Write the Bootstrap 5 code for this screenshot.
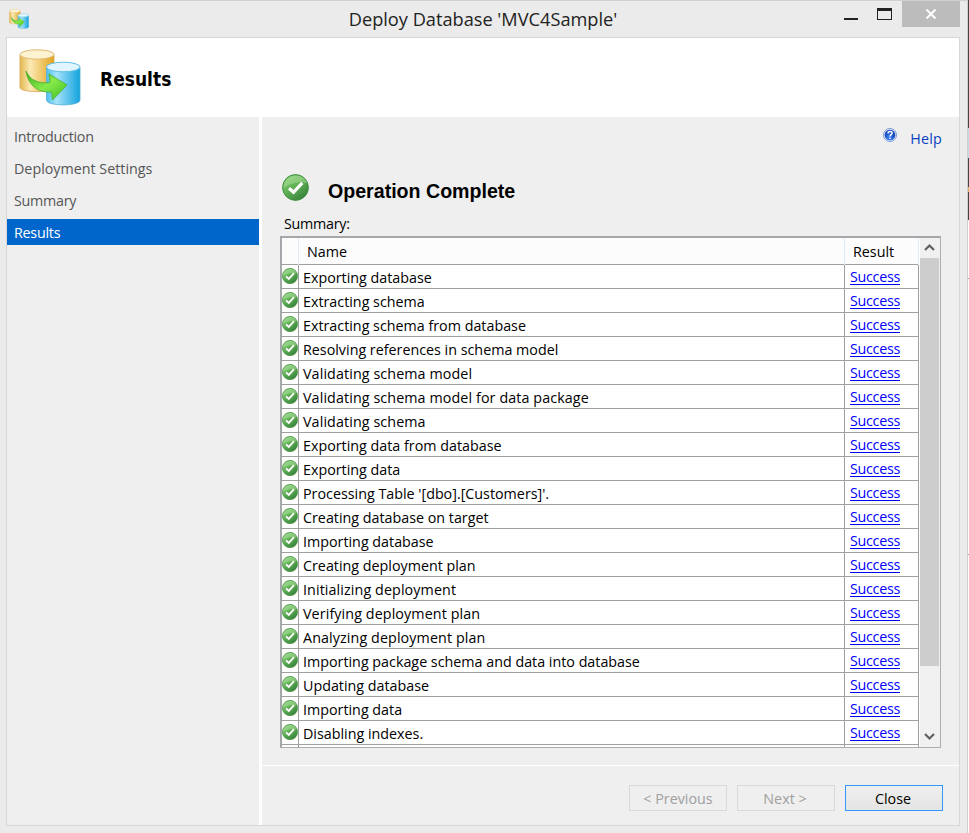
<!DOCTYPE html>
<html lang="en">
<head>
<meta charset="utf-8">
<title>Deploy Database 'MVC4Sample'</title>
<link href="https://cdn.jsdelivr.net/npm/bootstrap@5.3.0/dist/css/bootstrap.min.css" rel="stylesheet">
<style>
body{width:969px;height:833px;overflow:hidden;background:#fff;font:14.3px/20px "Open Sans","Noto Sans",sans-serif;color:#000}
.win{width:968px;height:833px;background:#ebebeb;border-top:1px solid #d0d0d0;border-right:1px solid #cfcfcf}
.edge{width:1px;background:linear-gradient(#444 128px,#c4dce6 128px 158px,#444 158px 187px,#e0b060 187px 192px,#444 192px 220px,#fff 220px 278px,#999 278px 279px,#fff 279px 554px,#999 554px 555px,#fff 555px)}
.titlebar{height:36px;padding-left:9px}
.titlebar .app{margin-top:8px}
.caption{font-size:18.2px;line-height:24px;padding-top:6px;color:#222;padding-left:93px}
.minb{width:14px;height:2px;margin-top:17px;background:#222}
.maxb{width:15px;height:12px;margin:7px 10px 0 19px;border:1px solid #222;border-top-width:3px}
.closeb{width:58px;height:26px;background:#bcbcbc;margin-right:7px}
.client{width:954px;height:789px;margin-left:6px;border:1px solid #d7d7d7;background:#efefef}
.banner{height:79px;padding-left:12px}
.banner h1{font:bold 19px/24px "DejaVu Sans Condensed","DejaVu Sans",sans-serif;font-stretch:condensed;margin:2px 0 0 19px}
.steps{width:255px;border-right:3px solid #fff;padding-top:6px;gap:6px}
.steps a{height:26px;width:252px;padding-left:7px;line-height:27px;color:#555;text-decoration:none}
.steps a.active{background:#06c;color:#fff}
.steps .tight{letter-spacing:-.25px}
.helpline{height:40px;padding:11px 17px 0 0;gap:13px;color:#0b3fbf}
.helpline span{line-height:22px;letter-spacing:.2px}
.done{height:27px;margin:17px 0 0 20px;gap:19px}
.done h2{font:bold 19.6px/24px "Liberation Sans",Arial,sans-serif;margin:5px 0 0}
.sumlabel{margin:12px 0 0 22px;height:23px;line-height:21px;letter-spacing:-.25px}
.gridbox{width:661px;height:512px;margin-left:18px;border:1px solid #abadb3;border-top:2px solid #a5a7ab;border-left:2px solid #a5a7ab;background:#fff}
.rowsarea{width:637px;height:509px;overflow:hidden}
.hd,.rw{display:grid;grid-template-columns:17px 546px 74px}
.hd{height:27px;background:#fcfcfc;border-bottom:1px solid #a0a0a0;line-height:27px}
.hd span{border-right:1px solid #e2ecf8;padding-left:8px}
.rw{height:24px;border-bottom:1px solid #a0a0a0;line-height:25px}
.rw>*{border-right:1px solid #a0a0a0;padding-left:4px;height:23px;white-space:nowrap}
.rw>.wide{letter-spacing:.1px}
.rw>.ic{padding:0;line-height:0;overflow:hidden}
.rw>.rs{padding-left:5px;line-height:24px;letter-spacing:-.28px}
.rs a{color:#00f;text-decoration:underline;text-underline-offset:2px;text-decoration-thickness:1px}
.sbar{width:21px;background:#f0f0f0;border-left:1px solid #fff;padding:0 1px 0 0}
.sbar svg{height:20px;width:19px}
.thumb{height:408px;width:19px;background:#cdcdcd}
.foot{height:60px;margin-top:17px;border-top:1px solid #fff;padding:19px 16px 0 0;gap:10px}
.foot .btn{width:98px;height:26px;border-radius:0;font-size:14.3px;line-height:25px;padding:0 2px 0 0;border:1px solid #d9d9d9;background:#efefef;color:#a0a0a0;opacity:1}
.foot .btn:first-child{padding:0}
.foot .btn.main{border-color:#39f;background:linear-gradient(#f0f0f0,#e4e4e4);color:#000}
</style>
<script src="https://cdn.jsdelivr.net/npm/bootstrap@5.3.0/dist/js/bootstrap.bundle.min.js"></script>
</head>
<body class="d-flex">
<svg width="0" height="0" class="position-absolute">
<defs>
<linearGradient id="gy"><stop offset="0" stop-color="#e5b650"/><stop offset=".3" stop-color="#fbe9b4"/><stop offset="1" stop-color="#e3a41c"/></linearGradient>
<linearGradient id="gb"><stop offset="0" stop-color="#4cc0ee"/><stop offset=".3" stop-color="#a5e2fa"/><stop offset="1" stop-color="#12a3dd"/></linearGradient>
<linearGradient id="ga" x2="1" y2="1"><stop offset="0" stop-color="#3fae1e"/><stop offset=".5" stop-color="#86ea4a"/><stop offset="1" stop-color="#3dbd1f"/></linearGradient>
<linearGradient id="gc" x2=".7" y2="1"><stop offset="0" stop-color="#8fd37f"/><stop offset=".5" stop-color="#62b257"/><stop offset="1" stop-color="#38823a"/></linearGradient>
<radialGradient id="gh" cx=".45" cy=".75"><stop offset="0" stop-color="#3f8cff"/><stop offset="1" stop-color="#1746bd"/></radialGradient>
<g id="dbs">
<path d="M1 5.500V38.500C1 44 35 44 35 38.500V5.500Z" fill="url(#gy)" stroke="#d5a75c" stroke-width=".8"/>
<ellipse cx="18" cy="5.500" rx="17" ry="4.700" fill="#fdf3d3" stroke="#e0b96e" stroke-width="1"/>
<path d="M27.500 18V51C27.500 57.500 61 57.500 61 51V18Z" fill="url(#gb)" stroke="#55acd2" stroke-width=".8"/>
<ellipse cx="44.200" cy="18" rx="16.800" ry="4.800" fill="#e0f5fd" stroke="#5fc0e6" stroke-width="1"/>
<path d="M7 22C11 31 19 35 31 33.500L30 25 48 36 33.500 51 32.500 43C20 44 9 37 7 22Z" fill="url(#ga)" stroke="#4aaf2c" stroke-width=".8"/>
</g>
<symbol id="ok" viewBox="0 0 27 27">
<circle cx="13.500" cy="13.500" r="12.900" fill="url(#gc)" stroke="#3b8d3c" stroke-width="1"/>
<path d="M1.500 14C2 5 9 1.500 15 1.800 21 2 24 6 25 9 17 7 8 9 1.500 14Z" fill="#c8f0b8" opacity=".35"/>
<path d="M7 14.300 11.500 18.300 20.300 8.800" fill="none" stroke="#fff" stroke-width="3.200"/>
</symbol>
</defs>
</svg>
<div class="win flex-shrink-0">
<div class="titlebar d-flex align-items-start">
<svg class="app" width="20" height="20" viewBox="0 0 62 57" preserveAspectRatio="none"><use href="#dbs"/></svg>
<div class="caption flex-grow-1 text-center">Deploy Database 'MVC4Sample'</div>
<div class="minb"></div><div class="maxb"></div>
<div class="closeb d-flex justify-content-center align-items-center"><svg width="12" height="10" viewBox="0 0 12 10"><path d="M1.500.5 10.500 9.500M10.500.5 1.500 9.500" stroke="#fff" stroke-width="2"/></svg></div>
</div>
<div class="client d-flex flex-column">
<header class="banner bg-white d-flex align-items-center flex-shrink-0"><svg width="62" height="57" viewBox="0 0 62 57"><use href="#dbs"/></svg><h1>Results</h1></header>
<div class="d-flex flex-grow-1">
<nav class="steps d-flex flex-column flex-shrink-0"><a href="#" class="tight">Introduction</a><a href="#">Deployment Settings</a><a href="#" class="tight">Summary</a><a href="#" class="active tight">Results</a></nav>
<main class="flex-grow-1">
<div class="helpline d-flex justify-content-end"><svg width="14" height="14" viewBox="0 0 14 14"><circle cx="7" cy="7" r="6.500" fill="#dce7fa" stroke="#7c98d4"/><circle cx="7" cy="7" r="5.300" fill="url(#gh)"/><path d="M5 5.500C5 2.800 9.300 2.900 9.100 5.300 9 6.700 7 6.700 7 8.400M7 9.700V11" fill="none" stroke="#fff" stroke-width="1.500"/></svg><span>Help</span></div>
<div class="done d-flex"><svg width="27" height="27"><use href="#ok"/></svg><h2>Operation Complete</h2></div>
<div class="sumlabel">Summary:</div>
<div class="gridbox d-flex">
<div class="rowsarea">
<div class="hd"><span></span><span>Name</span><span>Result</span></div>
<div class="rw"><div class="ic"><svg width="16" height="22" viewBox="0 0 16 22"><use href="#ok" y="3" width="16" height="16"/></svg></div><div>Exporting database</div><div class="rs"><a href="#">Success</a></div></div>
<div class="rw"><div class="ic"><svg width="16" height="22" viewBox="0 0 16 22"><use href="#ok" y="3" width="16" height="16"/></svg></div><div>Extracting schema</div><div class="rs"><a href="#">Success</a></div></div>
<div class="rw"><div class="ic"><svg width="16" height="22" viewBox="0 0 16 22"><use href="#ok" y="3" width="16" height="16"/></svg></div><div>Extracting schema from database</div><div class="rs"><a href="#">Success</a></div></div>
<div class="rw"><div class="ic"><svg width="16" height="22" viewBox="0 0 16 22"><use href="#ok" y="3" width="16" height="16"/></svg></div><div>Resolving references in schema model</div><div class="rs"><a href="#">Success</a></div></div>
<div class="rw"><div class="ic"><svg width="16" height="22" viewBox="0 0 16 22"><use href="#ok" y="3" width="16" height="16"/></svg></div><div class="wide">Validating schema model</div><div class="rs"><a href="#">Success</a></div></div>
<div class="rw"><div class="ic"><svg width="16" height="22" viewBox="0 0 16 22"><use href="#ok" y="3" width="16" height="16"/></svg></div><div class="wide">Validating schema model for data package</div><div class="rs"><a href="#">Success</a></div></div>
<div class="rw"><div class="ic"><svg width="16" height="22" viewBox="0 0 16 22"><use href="#ok" y="3" width="16" height="16"/></svg></div><div class="wide">Validating schema</div><div class="rs"><a href="#">Success</a></div></div>
<div class="rw"><div class="ic"><svg width="16" height="22" viewBox="0 0 16 22"><use href="#ok" y="3" width="16" height="16"/></svg></div><div>Exporting data from database</div><div class="rs"><a href="#">Success</a></div></div>
<div class="rw"><div class="ic"><svg width="16" height="22" viewBox="0 0 16 22"><use href="#ok" y="3" width="16" height="16"/></svg></div><div>Exporting data</div><div class="rs"><a href="#">Success</a></div></div>
<div class="rw"><div class="ic"><svg width="16" height="22" viewBox="0 0 16 22"><use href="#ok" y="3" width="16" height="16"/></svg></div><div>Processing Table '[dbo].[Customers]'.</div><div class="rs"><a href="#">Success</a></div></div>
<div class="rw"><div class="ic"><svg width="16" height="22" viewBox="0 0 16 22"><use href="#ok" y="3" width="16" height="16"/></svg></div><div>Creating database on target</div><div class="rs"><a href="#">Success</a></div></div>
<div class="rw"><div class="ic"><svg width="16" height="22" viewBox="0 0 16 22"><use href="#ok" y="3" width="16" height="16"/></svg></div><div>Importing database</div><div class="rs"><a href="#">Success</a></div></div>
<div class="rw"><div class="ic"><svg width="16" height="22" viewBox="0 0 16 22"><use href="#ok" y="3" width="16" height="16"/></svg></div><div>Creating deployment plan</div><div class="rs"><a href="#">Success</a></div></div>
<div class="rw"><div class="ic"><svg width="16" height="22" viewBox="0 0 16 22"><use href="#ok" y="3" width="16" height="16"/></svg></div><div class="wide">Initializing deployment</div><div class="rs"><a href="#">Success</a></div></div>
<div class="rw"><div class="ic"><svg width="16" height="22" viewBox="0 0 16 22"><use href="#ok" y="3" width="16" height="16"/></svg></div><div class="wide">Verifying deployment plan</div><div class="rs"><a href="#">Success</a></div></div>
<div class="rw"><div class="ic"><svg width="16" height="22" viewBox="0 0 16 22"><use href="#ok" y="3" width="16" height="16"/></svg></div><div class="wide">Analyzing deployment plan</div><div class="rs"><a href="#">Success</a></div></div>
<div class="rw"><div class="ic"><svg width="16" height="22" viewBox="0 0 16 22"><use href="#ok" y="3" width="16" height="16"/></svg></div><div>Importing package schema and data into database</div><div class="rs"><a href="#">Success</a></div></div>
<div class="rw"><div class="ic"><svg width="16" height="22" viewBox="0 0 16 22"><use href="#ok" y="3" width="16" height="16"/></svg></div><div>Updating database</div><div class="rs"><a href="#">Success</a></div></div>
<div class="rw"><div class="ic"><svg width="16" height="22" viewBox="0 0 16 22"><use href="#ok" y="3" width="16" height="16"/></svg></div><div>Importing data</div><div class="rs"><a href="#">Success</a></div></div>
<div class="rw"><div class="ic"><svg width="16" height="22" viewBox="0 0 16 22"><use href="#ok" y="3" width="16" height="16"/></svg></div><div>Disabling indexes.</div><div class="rs"><a href="#">Success</a></div></div>
<div class="rw"><div></div><div></div><div></div></div>
</div>
<div class="sbar d-flex flex-column"><svg viewBox="0 0 19 20"><path d="M5 12 9.500 7.500 14 12" fill="none" stroke="#606060" stroke-width="2.200"/></svg><div class="thumb"></div><svg class="mt-auto" viewBox="0 0 19 20"><path d="M5 7 9.500 11.500 14 7" fill="none" stroke="#606060" stroke-width="2.200"/></svg></div>
</div>
<div class="foot d-flex justify-content-end"><button class="btn" disabled>&lt; Previous</button><button class="btn" disabled>Next &gt;</button><button class="btn main">Close</button></div>
</main>
</div>
</div>
</div>
<div class="edge flex-shrink-0"></div>
</body>
</html>
